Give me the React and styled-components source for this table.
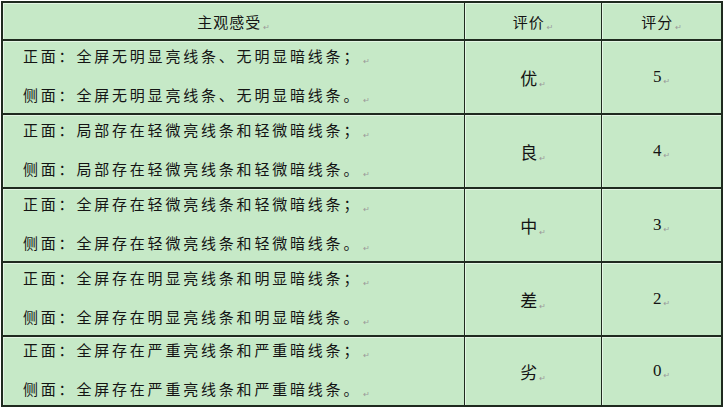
import React from 'react';
import styled, { createGlobalStyle } from 'styled-components';

const GlobalStyle = createGlobalStyle`
  html, body {
    margin: 0;
    padding: 0;
    background: #ffffff;
  }
  body {
    font-family: "Noto Sans CJK SC", "Liberation Serif", serif;
    color: #141414;
  }
`;

const lineColor = '#1f2a1f';
const cellBg = '#c6e9c7';

const Table = styled.div`
  margin: 1px 0 0 1px;
  width: 722px;
  box-sizing: border-box;
  border: 2px solid ${lineColor};
  background: ${cellBg};
`;

const Row = styled.div`
  display: grid;
  grid-template-columns: 462px 137px 1fr;
  height: ${(p) => p.h}px;
  border-bottom: ${(p) => (p.last ? 'none' : `2px solid ${lineColor}`)};
  box-sizing: content-box;
`;

const Cell = styled.div`
  display: flex;
  flex-direction: column;
  justify-content: center;
  align-items: ${(p) => (p.left ? 'flex-start' : 'center')};
  padding-left: ${(p) => (p.left ? '20px' : '0')};
  padding-top: ${(p) => (p.left ? '2px' : '0')};
  border-right: ${(p) => (p.end ? 'none' : `1px solid ${lineColor}`)};
  box-shadow: inset 1px 1px 0 #e4f5e4;
  font-size: 15px;
  overflow: hidden;
`;

const Line = styled.div`
  line-height: 33px;
  letter-spacing: 2.8px;
  white-space: nowrap;
`;

const Head = styled.span`
  font-size: 15px;
  letter-spacing: 1px;
`;

const Grade = styled.span`
  font-size: 17px;
`;

const Score = styled.span`
  font-family: "Liberation Serif", serif;
  font-size: 17px;
`;

const Mark = styled.span`
  font-family: "DejaVu Sans", sans-serif;
  font-size: 8px;
  color: #9a9a9a;
  letter-spacing: 0;
  margin-left: 2px;
  vertical-align: -2px;
`;

const rows = [
  {
    front: '正面：全屏无明显亮线条、无明显暗线条；',
    side: '侧面：全屏无明显亮线条、无明显暗线条。',
    grade: '优',
    score: '5',
  },
  {
    front: '正面：局部存在轻微亮线条和轻微暗线条；',
    side: '侧面：局部存在轻微亮线条和轻微暗线条。',
    grade: '良',
    score: '4',
  },
  {
    front: '正面：全屏存在轻微亮线条和轻微暗线条；',
    side: '侧面：全屏存在轻微亮线条和轻微暗线条。',
    grade: '中',
    score: '3',
  },
  {
    front: '正面：全屏存在明显亮线条和明显暗线条；',
    side: '侧面：全屏存在明显亮线条和明显暗线条。',
    grade: '差',
    score: '2',
  },
  {
    front: '正面：全屏存在严重亮线条和严重暗线条；',
    side: '侧面：全屏存在严重亮线条和严重暗线条。',
    grade: '劣',
    score: '0',
  },
];

const Enter = () => <Mark>↵</Mark>;

const App = () => (
  <>
    <GlobalStyle />
    <Table>
      <Row h={36}>
        <Cell>
          <Head>
            主观感受
            <Enter />
          </Head>
        </Cell>
        <Cell>
          <Head>
            评价
            <Enter />
          </Head>
        </Cell>
        <Cell end>
          <Head>
            评分
            <Enter />
          </Head>
        </Cell>
      </Row>
      {rows.map((r, i) => (
        <Row key={r.grade} h={i === rows.length - 1 ? 68 : 72} last={i === rows.length - 1}>
          <Cell left>
            <Line>
              {r.front}
              <Enter />
            </Line>
            <Line>
              {r.side}
              <Enter />
            </Line>
          </Cell>
          <Cell>
            <Grade>
              {r.grade}
              <Enter />
            </Grade>
          </Cell>
          <Cell end>
            <Score>
              {r.score}
              <Enter />
            </Score>
          </Cell>
        </Row>
      ))}
    </Table>
  </>
);

export default App;
